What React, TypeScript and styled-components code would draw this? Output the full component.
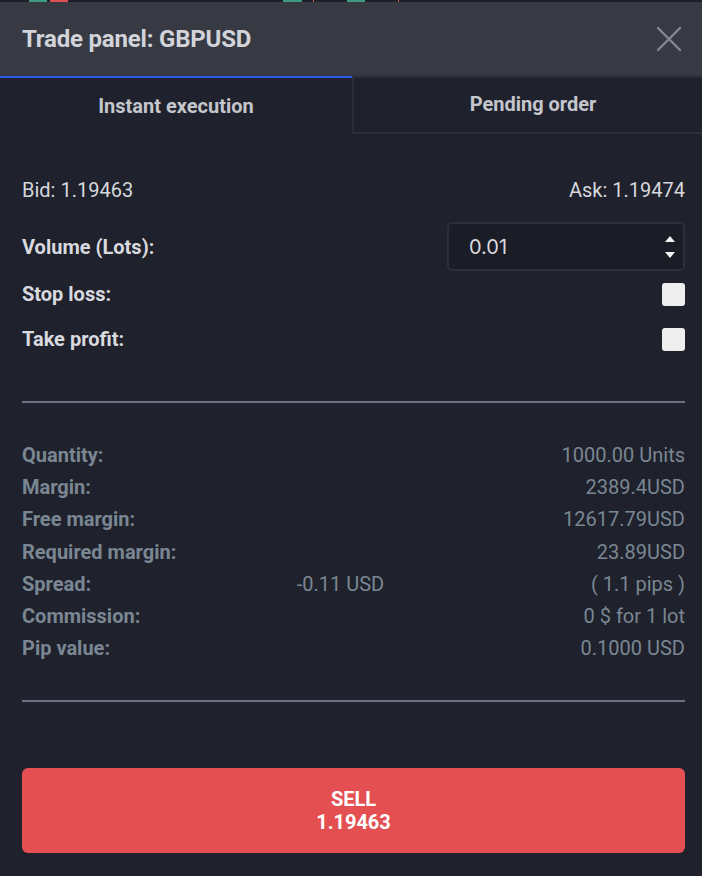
import styled, { createGlobalStyle } from 'styled-components'

const GlobalStyle = createGlobalStyle`
  html, body {
    margin: 0;
    padding: 0;
    background: #1f212c;
  }
  * {
    box-sizing: border-box;
  }
`

const infoRows: { label: string; value: string; middle?: string }[] = [
  { label: 'Quantity:', value: '1000.00 Units' },
  { label: 'Margin:', value: '2389.4USD' },
  { label: 'Free margin:', value: '12617.79USD' },
  { label: 'Required margin:', value: '23.89USD' },
  { label: 'Spread:', value: '( 1.1 pips )', middle: '-0.11 USD' },
  { label: 'Commission:', value: '0 $ for 1 lot' },
  { label: 'Pip value:', value: '0.1000 USD' },
]

export default function App() {
  return (
    <>
      <GlobalStyle />
      <Panel>
        <ChartStrip viewBox="0 0 702 2" preserveAspectRatio="none">
          <rect x="29" y="0" width="18" height="2" fill="#3f9a84" />
          <rect x="50" y="0" width="18" height="2" fill="#e04f52" />
          <rect x="283" y="0" width="19" height="2" fill="#3f9a84" />
          <rect x="313" y="0" width="1" height="2" fill="#e04f52" />
          <rect x="347" y="0" width="18" height="2" fill="#3f9a84" />
          <rect x="398" y="0" width="1" height="2" fill="#e04f52" />
        </ChartStrip>
        <Header>
          <Title>Trade panel: GBPUSD</Title>
          <CloseButton aria-label="Close">
            <svg width="26" height="26" viewBox="0 0 26 26">
              <path
                d="M2 2 L24 24 M24 2 L2 24"
                stroke="#858892"
                strokeWidth="2.4"
                strokeLinecap="round"
              />
            </svg>
          </CloseButton>
        </Header>
        <Tabs>
          <Tab active>Instant execution</Tab>
          <Tab>Pending order</Tab>
        </Tabs>
        <Body>
          <PriceRow>
            <span>Bid: 1.19463</span>
            <span>Ask: 1.19474</span>
          </PriceRow>
          <FieldRow height={49}>
            <FieldLabel>Volume (Lots):</FieldLabel>
            <VolumeBox>
              <VolumeValue>0.01</VolumeValue>
              <Spinner>
                <svg width="12" height="8" viewBox="0 0 12 8">
                  <path d="M6 1 L11 7 L1 7 Z" fill="#f2f2f2" />
                </svg>
                <svg width="12" height="8" viewBox="0 0 12 8">
                  <path d="M1 1 L11 1 L6 7 Z" fill="#f2f2f2" />
                </svg>
              </Spinner>
            </VolumeBox>
          </FieldRow>
          <FieldRow height={46}>
            <FieldLabel>Stop loss:</FieldLabel>
            <Checkbox />
          </FieldRow>
          <FieldRow height={44}>
            <FieldLabel>Take profit:</FieldLabel>
            <Checkbox />
          </FieldRow>
          <Divider top={40} />
          <InfoList>
            {infoRows.map((row) => (
              <InfoRow key={row.label}>
                <InfoLabel>{row.label}</InfoLabel>
                <InfoMiddle>{row.middle}</InfoMiddle>
                <InfoValue>{row.value}</InfoValue>
              </InfoRow>
            ))}
          </InfoList>
          <Divider top={36} />
          <SellButton>
            <span>SELL</span>
            <span>1.19463</span>
          </SellButton>
        </Body>
      </Panel>
    </>
  )
}

const Panel = styled.div`
  width: 702px;
  height: 876px;
  background: #1f212c;
  font-family: Roboto, 'Liberation Sans', sans-serif;
  display: flex;
  flex-direction: column;
  overflow: hidden;
`

const ChartStrip = styled.svg`
  display: block;
  width: 702px;
  height: 2px;
  background: #1d1f28;
`

const Header = styled.header`
  height: 74px;
  background: #373a43;
  display: flex;
  align-items: center;
  justify-content: space-between;
  padding: 0 20px 0 22px;
  border-bottom: 1px solid #30333c;
`

const Title = styled.h1`
  margin: 0;
  font-size: 24px;
  font-weight: 700;
  color: #d2d4da;
  letter-spacing: -0.2px;
`

const CloseButton = styled.button`
  border: none;
  background: none;
  padding: 0;
  display: flex;
  cursor: pointer;
`

const Tabs = styled.div`
  display: flex;
  height: 58px;
`

const Tab = styled.div<{ active?: boolean }>`
  flex: 0 0 ${({ active }) => (active ? '352px' : '360px')};
  display: flex;
  align-items: center;
  justify-content: center;
  font-size: 20px;
  font-weight: 700;
  color: #c4c6cc;
  border-top: 2px solid ${({ active }) => (active ? '#2f5de6' : '#2b2e37')};
  border-left: ${({ active }) => (active ? 'none' : '2px solid #2b2e37')};
  border-bottom: ${({ active }) => (active ? 'none' : '2px solid #2b2e37')};
  padding-bottom: ${({ active }) => (active ? '0' : '2px')};
`

const Body = styled.div`
  padding: 40px 17px 0 22px;
  display: flex;
  flex-direction: column;
`

const PriceRow = styled.div`
  display: flex;
  justify-content: space-between;
  font-size: 20px;
  color: #d6d8dd;
  height: 32px;
  align-items: center;
  margin-bottom: 16px;
`

const FieldRow = styled.div<{ height: number }>`
  height: ${({ height }) => height}px;
  display: flex;
  align-items: center;
  justify-content: space-between;
`

const FieldLabel = styled.span`
  font-size: 20px;
  font-weight: 700;
  color: #d8dadf;
`

const VolumeBox = styled.div`
  width: 238px;
  height: 49px;
  background: #1a1c26;
  border: 2px solid #2c2f38;
  border-radius: 5px;
  display: flex;
  align-items: center;
  justify-content: space-between;
  padding: 0 7px 0 20px;
`

const VolumeValue = styled.span`
  font-family: Inter, 'Liberation Sans', sans-serif;
  font-size: 20px;
  color: #d9dadf;
`

const Spinner = styled.div`
  display: flex;
  flex-direction: column;
  gap: 8px;
`

const Checkbox = styled.div`
  width: 23px;
  height: 23px;
  border-radius: 3px;
  background: #eeeeee;
`

const Divider = styled.hr<{ top: number }>`
  margin: ${({ top }) => top}px 0 0;
  border: none;
  height: 2px;
  background: #6c7184;
`

const InfoList = styled.div`
  display: flex;
  flex-direction: column;
  padding-top: 36px;
`

const InfoRow = styled.div`
  display: grid;
  grid-template-columns: 1fr auto 1fr;
  height: 32.2px;
  align-items: center;
  font-size: 20px;
  color: #7a8793;
`

const InfoLabel = styled.span`
  font-weight: 700;
`

const InfoMiddle = styled.span`
  justify-self: center;
  transform: translateX(-13px);
`

const InfoValue = styled.span`
  justify-self: end;
`

const SellButton = styled.button`
  margin-top: 66px;
  height: 85px;
  border: none;
  border-radius: 6px;
  background: #e45052;
  color: #ffffff;
  font-family: Roboto, 'Liberation Sans', sans-serif;
  font-size: 20px;
  font-weight: 700;
  line-height: 23px;
  display: flex;
  flex-direction: column;
  align-items: center;
  justify-content: center;
  cursor: pointer;
`
